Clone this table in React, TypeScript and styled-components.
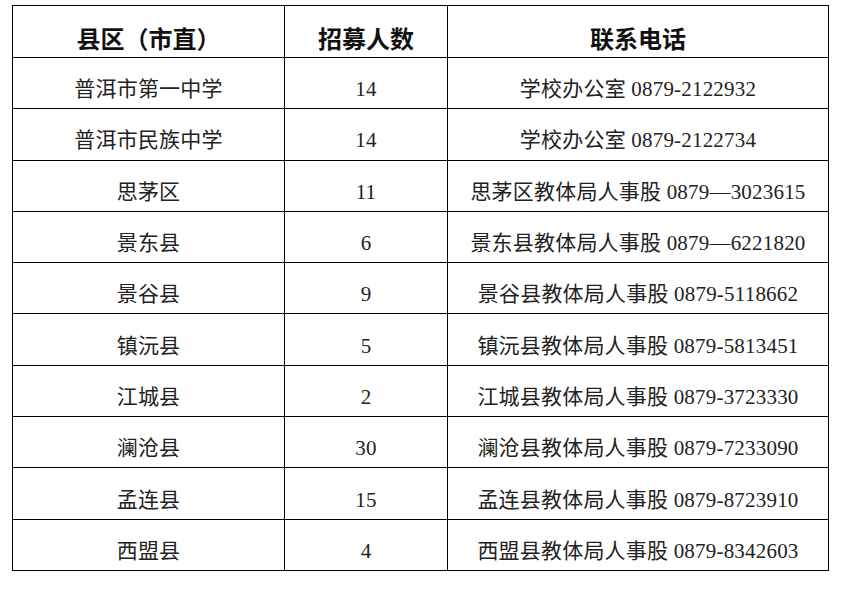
import React from 'react';
import styled, { createGlobalStyle } from 'styled-components';

const GlobalStyle = createGlobalStyle`
  html, body {
    margin: 0;
    padding: 0;
    background: #ffffff;
  }
`;

const Page = styled.div`
  padding: 5px 0 0 12px;
`;

const Table = styled.table`
  border-collapse: collapse;
  table-layout: fixed;
  width: 816px;
  color: #111;
`;

const HeadCell = styled.th<{ $width: number }>`
  width: ${p => p.$width}px;
  height: 52px;
  box-sizing: border-box;
  border: 1.3px solid #000;
  padding: 12px 0 0 0;
  text-align: center;
  vertical-align: middle;
  font-family: "Noto Sans CJK SC", "Liberation Sans", sans-serif;
  font-size: 24px;
  font-weight: 700;
  line-height: 1;
`;

const Row = styled.tr`
  height: 51.3px;
`;

const Cell = styled.td`
  box-sizing: border-box;
  border: 1.3px solid #000;
  padding: 13px 0 0 0;
  text-align: center;
  vertical-align: middle;
  font-family: "Liberation Serif", "Noto Sans CJK SC", serif;
  font-size: 21px;
  font-weight: 400;
  line-height: 1;
  letter-spacing: 0.2px;
  color: #222;
  white-space: nowrap;
`;

interface Entry {
  area: string;
  count: number;
  phone: string;
}

const entries: Entry[] = [
  { area: '普洱市第一中学', count: 14, phone: '学校办公室 0879-2122932' },
  { area: '普洱市民族中学', count: 14, phone: '学校办公室 0879-2122734' },
  { area: '思茅区', count: 11, phone: '思茅区教体局人事股 0879—3023615' },
  { area: '景东县', count: 6, phone: '景东县教体局人事股 0879—6221820' },
  { area: '景谷县', count: 9, phone: '景谷县教体局人事股 0879-5118662' },
  { area: '镇沅县', count: 5, phone: '镇沅县教体局人事股 0879-5813451' },
  { area: '江城县', count: 2, phone: '江城县教体局人事股 0879-3723330' },
  { area: '澜沧县', count: 30, phone: '澜沧县教体局人事股 0879-7233090' },
  { area: '孟连县', count: 15, phone: '孟连县教体局人事股 0879-8723910' },
  { area: '西盟县', count: 4, phone: '西盟县教体局人事股 0879-8342603' },
];

export default function App() {
  return (
    <>
      <GlobalStyle />
      <Page>
        <Table>
          <thead>
            <tr>
              <HeadCell $width={272}>县区（市直）</HeadCell>
              <HeadCell $width={163}>招募人数</HeadCell>
              <HeadCell $width={381}>联系电话</HeadCell>
            </tr>
          </thead>
          <tbody>
            {entries.map(e => (
              <Row key={e.area}>
                <Cell>{e.area}</Cell>
                <Cell>{e.count}</Cell>
                <Cell>{e.phone}</Cell>
              </Row>
            ))}
          </tbody>
        </Table>
      </Page>
    </>
  );
}
